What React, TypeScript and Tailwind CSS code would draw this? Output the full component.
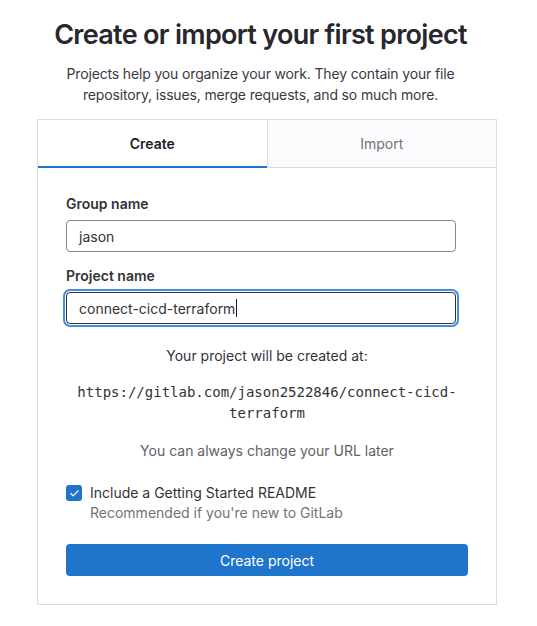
import { Check } from 'lucide-react';

export default function App() {
  return (
    <div className="min-h-screen bg-white font-['Inter',sans-serif] text-[#3a383f]">
      <div className="flex flex-col items-center pt-[17px]">
        <div className="flex flex-col items-center pr-[16px]">
          <h1 className="text-[27px] leading-[36px] font-semibold text-[#28272d] tracking-[-0.7px]">Create or import your first project</h1>
          <p className="mt-[10px] w-[420px] text-center text-[14px] leading-[21px] tracking-[-0.15px] text-[#3a383f]">
            Projects help you organize your work. They contain your file repository, issues, merge requests, and so much more.
          </p>
        </div>

        <div className="mt-[14px] mr-[3px] w-[460px] border border-[#dcdcde]">
          <div className="flex h-[48px] border-b border-[#dcdcde]">
            <button className="flex-1 -mb-px border-b-2 border-[#1f75cb] text-[14px] font-semibold text-[#1f1e24]">Create</button>
            <button className="flex-1 border-l border-[#dcdcde] bg-[#fbfafd] text-[14px] text-[#737278]">Import</button>
          </div>

          <div className="px-[28px] pt-[26px] pb-[28px]">
            <label className="block text-[14px] leading-[20px] font-semibold text-[#333238]">Group name</label>
            <div className="mt-[6px] flex h-[32px] w-[390px] items-center rounded-[4px] border border-[#89888d] px-[12px] text-[14px] text-[#333238]">jason</div>

            <label className="mt-[14px] block text-[14px] leading-[20px] font-semibold text-[#333238]">Project name</label>
            <div className="mt-[6px] flex h-[32px] w-[390px] items-center rounded-[4px] border border-[#333238] px-[12px] text-[14px] text-[#333238] shadow-[0_0_0_1px_#fff,0_0_0_3px_#428fdc]">
              connect-cicd-terraform<span className="ml-px inline-block h-[18px] w-px bg-[#1f1e24]" />
            </div>

            <p className="mt-[22px] text-center text-[14px] leading-[20px] text-[#333238]">Your project will be created at:</p>
            <p className="mx-auto mt-[16px] w-[390px] break-words text-center font-['DejaVu_Sans_Mono',monospace] text-[14px] leading-[21px] text-[#333238]">
              https://gitlab.com/jason2522846/connect-cicd-terraform
            </p>
            <p className="mt-[17px] text-center text-[14px] leading-[20px] text-[#626168]">You can always change your URL later</p>

            <div className="mt-[22px] flex gap-[8px]">
              <div className="mt-[2px] flex h-[16px] w-[16px] items-center justify-center rounded-[3px] bg-[#1f75cb]">
                <Check className="h-[11px] w-[11px] text-white" strokeWidth={2.5} />
              </div>
              <div>
                <div className="text-[14px] leading-[20px] text-[#333238]">Include a Getting Started README</div>
                <div className="text-[14px] leading-[20px] text-[#737278]">Recommended if you're new to GitLab</div>
              </div>
            </div>

            <button className="mt-[21px] h-[32px] w-full rounded-[4px] bg-[#1f75cb] text-[14px] text-white">Create project</button>
          </div>
        </div>
      </div>
    </div>
  );
}
